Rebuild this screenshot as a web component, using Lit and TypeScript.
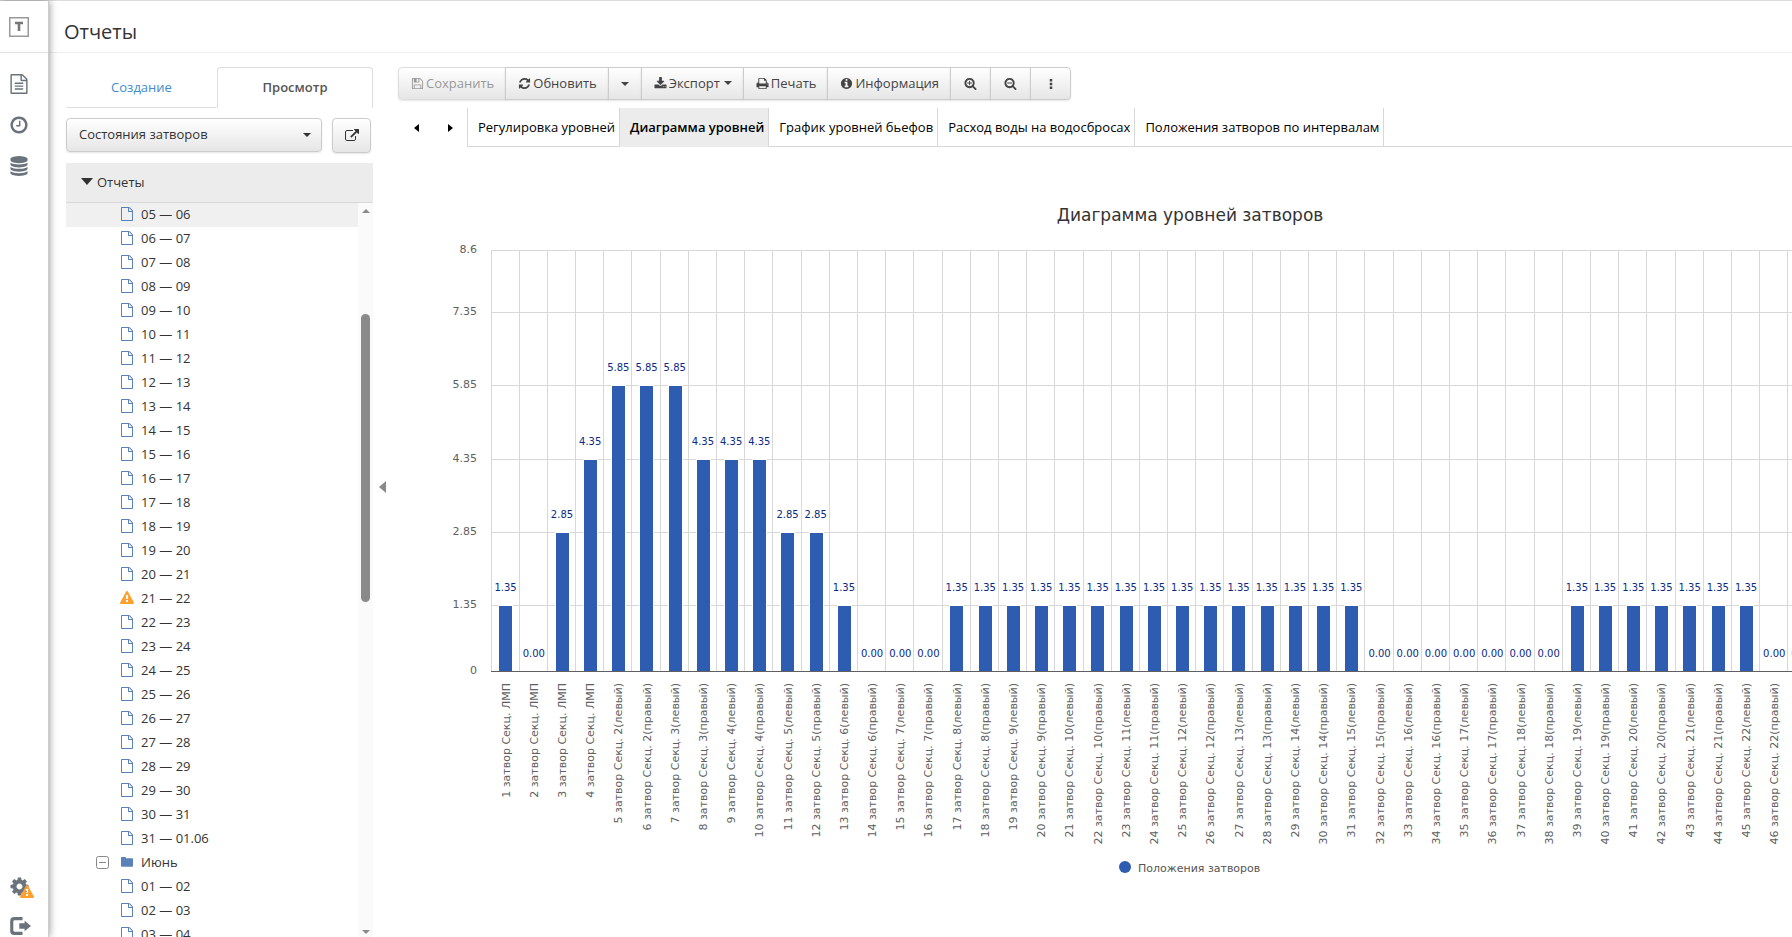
import { LitElement, html, svg, css } from "lit";
import { customElement, property, state } from "lit/decorators.js";
import { classMap } from "lit/directives/class-map.js";

const PAGE =
  "M1596 380q28 28 48 76t20 88v1152q0 40-28 68t-68 28h-1344q-40 0-68-28t-28-68v-1600q0-40 28-68t68-28h896q40 0 88 20t76 48zm-444-244v376h376q-10-29-22-41l-313-313q-12-12-41-22zm384 1528v-1024h-416q-40 0-68-28t-28-68v-416h-768v1536h1280z";
const LENS =
  "M1216 832q0-185-131.5-316.5t-316.5-131.5-316.5 131.5-131.5 316.5 131.5 316.5 316.5 131.5 316.5-131.5 131.5-316.5zm512 832q0 53-37.5 90.5t-90.5 37.5q-54 0-90-38l-343-342q-179 124-399 124-143 0-273.5-55.5t-225-150-150-225-55.5-273.5 55.5-273.5 150-225 225-150 273.5-55.5 273.5 55.5 225 150 150 225 55.5 273.5q0 220-124 399l343 343q37 37 37 90z";

const ICONS: Record<string, string> = {
  page: PAGE,
  text:
    PAGE +
    "M512 800q0-14 9-23t23-9h704q14 0 23 9t9 23v64q0 14-9 23t-23 9h-704q-14 0-23-9t-9-23v-64zm736 224q14 0 23 9t9 23v64q0 14-9 23t-23 9h-704q-14 0-23-9t-9-23v-64q0-14 9-23t23-9h704zm0 256q14 0 23 9t9 23v64q0 14-9 23t-23 9h-704q-14 0-23-9t-9-23v-64q0-14 9-23t23-9h704z",
  clock:
    "M1024 544v448q0 14-9 23t-23 9h-320q-14 0-23-9t-9-23v-64q0-14 9-23t23-9h224v-352q0-14 9-23t23-9h64q14 0 23 9t9 23zm416 352q0-148-73-273t-198-198-273-73-273 73-198 198-73 273 73 273 198 198 273 73 273-73 198-198 73-273zm224 0q0 209-103 385.5t-279.5 279.5-385.5 103-385.5-103-279.5-279.5-103-385.5 103-385.5 279.5-279.5 385.5-103 385.5 103 279.5 279.5 103 385.5z",
  database:
    "M896 768q237 0 443-43t325-127v170q0 69-103 128t-280 93.5-385 34.5-385-34.5-280-93.5-103-128v-170q119 84 325 127t443 43zm0 768q237 0 443-43t325-127v170q0 69-103 128t-280 93.5-385 34.5-385-34.5-280-93.5-103-128v-170q119 84 325 127t443 43zm0-384q237 0 443-43t325-127v170q0 69-103 128t-280 93.5-385 34.5-385-34.5-280-93.5-103-128v-170q119 84 325 127t443 43zm0-1152q208 0 385 34.5t280 93.5 103 128v128q0 69-103 128t-280 93.5-385 34.5-385-34.5-280-93.5-103-128v-128q0-69 103-128t280-93.5 385-34.5z",
  cog:
    "M1152 896q0-106-75-181t-181-75-181 75-75 181 75 181 181 75 181-75 75-181zm512-109v222q0 12-8 23t-20 13l-185 28q-19 54-39 91 35 50 107 138 10 12 10 25t-9 23q-27 37-99 108t-94 71q-12 0-26-9l-138-108q-44 23-91 38-16 136-29 186-7 28-36 28h-222q-14 0-24.5-8.5t-11.5-21.5l-28-184q-49-16-90-37l-141 107q-10 9-25 9-14 0-25-11-126-114-165-168-7-10-7-23 0-12 8-23 15-21 51-66.5t54-70.5q-27-50-41-99l-183-27q-13-2-21-12.5t-8-23.5v-222q0-12 8-23t19-13l186-28q14-46 39-92-40-57-107-138-10-12-10-24 0-10 9-23 26-36 98.5-107.5t94.5-71.5q13 0 26 10l138 107q44-23 91-38 16-136 29-186 7-28 36-28h222q14 0 24.5 8.5t11.5 21.5l28 184q49 16 90 37l142-107q9-9 24-9 13 0 25 10 129 119 165 170 7 8 7 22 0 12-8 23-15 21-51 66.5t-54 70.5q26 50 41 98l183 28q13 2 21 12.5t8 23.5z",
  exit:
    "M1100 160v272h-640q-110 0-110 110v708q0 110 110 110h640v272h-680q-322 0-322-322v-828q0-322 322-322zM1270 470l522 426-522 426v-210h-430v-432h430z",
  save:
    "M512 1536h768v-384h-768v384zm896 0h128v-896q0-14-10-38.5t-20-34.5l-281-281q-10-10-34-20t-39-10v416q0 40-28 68t-68 28h-576q-40 0-68-28t-28-68v-416h-128v1280h128v-416q0-40 28-68t68-28h832q40 0 68 28t28 68v416zm-384-928v-320q0-13-9.5-22.5t-22.5-9.5h-192q-13 0-22.5 9.5t-9.5 22.5v320q0 13 9.5 22.5t22.5 9.5h192q13 0 22.5-9.5t9.5-22.5zm640 32v928q0 40-28 68t-68 28h-1344q-40 0-68-28t-28-68v-1344q0-40 28-68t68-28h928q40 0 88 20t76 48l280 280q28 28 48 76t20 88z",
  refresh:
    "M1639 1056q0 5-1 7-64 268-268 434.5t-478 166.5q-146 0-282.5-55t-243.5-157l-129 129q-19 19-45 19t-45-19-19-45v-448q0-26 19-45t45-19h448q26 0 45 19t19 45-19 45l-137 137q71 66 161 102t187 36q134 0 250-65t186-179q11-17 53-117 8-23 30-23h192q13 0 22.5 9.5t9.5 22.5zm25-800v448q0 26-19 45t-45 19h-448q-26 0-45-19t-19-45 19-45l138-138q-148-137-349-137-134 0-250 65t-186 179q-11 17-53 117-8 23-30 23h-199q-13 0-22.5-9.5t-9.5-22.5v-7q65-268 270-434.5t480-166.5q146 0 284 55.5t245 156.5l130-129q19-19 45-19t45 19 19 45z",
  download:
    "M1344 1344q0-26-19-45t-45-19-45 19-19 45 19 45 45 19 45-19 19-45zm256 0q0-26-19-45t-45-19-45 19-19 45 19 45 45 19 45-19 19-45zm128-224v320q0 40-28 68t-68 28h-1472q-40 0-68-28t-28-68v-320q0-40 28-68t68-28h465l135 136q58 56 136 56t136-56l136-136h464q40 0 68 28t28 68zm-325-569q17 41-14 70l-448 448q-18 19-45 19t-45-19l-448-448q-31-29-14-70 17-39 59-39h256v-448q0-26 19-45t45-19h256q26 0 45 19t19 45v448h256q42 0 59 39z",
  print:
    "M448 1536h896v-256h-896v256zm0-640h896v-384h-160q-40 0-68-28t-28-68v-160h-640v640zm1152 64q0-26-19-45t-45-19-45 19-19 45 19 45 45 19 45-19 19-45zm128 0v416q0 13-9.5 22.5t-22.5 9.5h-224v160q0 40-28 68t-68 28h-960q-40 0-68-28t-28-68v-160h-224q-13 0-22.5-9.5t-9.5-22.5v-416q0-79 56.5-135.5t135.5-56.5h64v-544q0-40 28-68t68-28h672q40 0 88 20t76 48l152 152q28 28 48 76t20 88v256h64q79 0 135.5 56.5t56.5 135.5z",
  info:
    "M1152 1376v-160q0-14-9-23t-23-9h-96v-512q0-14-9-23t-23-9h-320q-14 0-23 9t-9 23v160q0 14 9 23t23 9h96v320h-96q-14 0-23 9t-9 23v160q0 14 9 23t23 9h448q14 0 23-9t9-23zm-128-896v-160q0-14-9-23t-23-9h-192q-14 0-23 9t-9 23v160q0 14 9 23t23 9h192q14 0 23-9t9-23zm640 416q0 209-103 385.5t-279.5 279.5-385.5 103-385.5-103-279.5-279.5-103-385.5 103-385.5 279.5-279.5 385.5-103 385.5 103 279.5 279.5 103 385.5z",
  zoomIn: LENS + "M448 768h256v-256h128v256h256v128h-256v256h-128v-256h-256z",
  zoomOut: LENS + "M448 768h640v128h-640z",
  more:
    "M736 256h320v320h-320zM736 736h320v320h-320zM736 1216h320v320h-320z",
  external:
    "M1408 928v320q0 119-84.5 203.5t-203.5 84.5h-832q-119 0-203.5-84.5t-84.5-203.5v-832q0-119 84.5-203.5t203.5-84.5h704q14 0 23 9t9 23v64q0 14-9 23t-23 9h-704q-66 0-113 47t-47 113v832q0 66 47 113t113 47h832q66 0 113-47t47-113v-320q0-14 9-23t23-9h64q14 0 23 9t9 23zm384-864v512q0 26-19 45t-45 19-45-19l-176-176-652 652q-10 10-23 10t-23-10l-114-114q-10-10-10-23t10-23l652-652-176-176q-19-19-19-45t19-45 45-19h512q26 0 45 19t19 45z",
  warning:
    "M1024 1375v-190q0-14-9.5-23.5t-22.5-9.5h-192q-13 0-22.5 9.5t-9.5 23.5v190q0 14 9.5 23.5t22.5 9.5h192q13 0 22.5-9.5t9.5-23.5zm-2-374l18-459q0-12-10-19-13-11-24-11h-220q-11 0-24 11-10 7-10 21l17 457q0 10 10 16.5t24 6.5h185q14 0 23.5-6.5t10.5-16.5zm-14-934l768 1408q35 63-2 126-17 29-46.5 46t-63.5 17h-1536q-34 0-63.5-17t-46.5-46q-37-63-2-126l768-1408q17-31 47-49t65-18 65 18 47 49z",
  folder:
    "M128 350q0-94 94-94h440q94 0 94 94v66h814q94 0 94 94v900q0 94-94 94h-1348q-94 0-94-94z",
};

const icon = (name: string, size = 14, cls = "") =>
  html`<svg class="icon ${cls}" width=${size} height=${size} viewBox="0 0 1792 1792" aria-hidden="true">
    <path fill-rule="evenodd" d=${ICONS[name]}></path>
  </svg>`;

const caret = (dir = "down") => {
  const d: Record<string, string> = {
    down: "M0 0h8l-4 4z",
    up: "M0 4h8l-4-4z",
  };
  return html`<svg class="caret" width="8" height="4" viewBox="0 0 8 4" aria-hidden="true"><path d=${d[dir]}></path></svg>`;
};

const side = (dir: "left" | "right", w: number, h: number) =>
  html`<svg class="caret" width=${w} height=${h} viewBox="0 0 5 10" preserveAspectRatio="none" aria-hidden="true">
    <path d=${dir === "left" ? "M5 0v10l-5-5z" : "M0 0v10l5-5z"}></path>
  </svg>`;

const pad = (n: number) => String(n).padStart(2, "0");

interface Gate {
  label: string;
  value: number;
}

const LEVELS = [
  1.35, 0, 2.85, 4.35, 5.85, 5.85, 5.85, 4.35, 4.35, 4.35, 2.85, 2.85, 1.35, 0, 0, 0,
  ...Array(15).fill(1.35),
  ...Array(7).fill(0),
  ...Array(7).fill(1.35),
  ...Array(7).fill(0),
];

const GATES: Gate[] = LEVELS.map((value, i) => {
  const n = i + 1;
  if (n <= 4) return { label: `${n} затвор Секц. ЛМП`, value };
  const section = Math.floor((n - 5) / 2) + 2;
  return { label: `${n} затвор Секц. ${section}(${n % 2 ? "левый" : "правый"})`, value };
});

@customElement("level-chart")
class LevelChart extends LitElement {
  @property({ attribute: false }) gates: Gate[] = [];
  @property() heading = "";
  @property() series = "";

  static styles = css`
    :host {
      display: block;
      font-family: "DejaVu Sans", sans-serif;
    }
    svg {
      display: block;
    }
    .grid {
      stroke: #d8d8d8;
      fill: none;
      shape-rendering: crispEdges;
    }
    .axis {
      stroke: #606060;
      shape-rendering: crispEdges;
    }
    .bar {
      fill: #2e5cb0;
      stroke: #fff;
      shape-rendering: crispEdges;
    }
    .title {
      font-size: 17px;
      fill: #333;
    }
    .tick,
    .name {
      font-size: 11px;
      fill: #606060;
    }
    .value {
      font-size: 10px;
      fill: #0a2a86;
    }
    .legend {
      font-size: 11px;
      fill: #555;
    }
    .dot {
      fill: #2e5cb0;
    }
  `;

  render() {
    const left = 93;
    const top = 90;
    const base = 511;
    const max = 8.6;
    const step = 28.192;
    const right = left + step * this.gates.length;
    const width = Math.round(right + 25);
    const mid = width / 2;
    const y = (v: number) => Math.ceil(base - ((base - top) * v) / max);
    const centre = (i: number) => left + 0.5 + step * (i + 0.5);

    return html`<svg width=${width} height="720" role="img" aria-label=${this.heading}>
      <text class="title" x=${mid} y="61" text-anchor="middle">${this.heading}</text>
      <g class="grid">
        ${[...this.gates, null].map((_, i) => {
          const x = Math.floor(left + step * i) + 0.5;
          return svg`<path d="M${x} ${top}V${base}"></path>`;
        })}
        ${[8.6, 7.35, 5.85, 4.35, 2.85, 1.35].map(
          (v) => svg`<path d="M${left} ${y(v) + 0.5}H${right}"></path>`
        )}
      </g>
      ${[8.6, 7.35, 5.85, 4.35, 2.85, 1.35, 0].map(
        (v) => svg`<text class="tick" x="79" y=${y(v) + 3} text-anchor="end">${v}</text>`
      )}
      ${this.gates.map((g, i) => {
        const x = Math.round(centre(i) - 6.2);
        const h = base - y(g.value);
        return svg`
          ${g.value ? svg`<rect class="bar" x=${x - 0.5} y=${base - h + 0.5} width="14" height=${h}></rect>` : ""}
          <text class="value" x=${centre(i)} y=${base - h - 14} text-anchor="middle">${g.value.toFixed(2)}</text>
          <text class="name" transform="translate(${Math.round(centre(i)) + 4} 523) rotate(-90)" text-anchor="end">${g.label}</text>`;
      })}
      <path class="axis" d="M${left} ${base + 0.5}H${right}"></path>
      <circle class="dot" cx=${mid - 65} cy="707" r="6"></circle>
      <text class="legend" x=${mid - 52} y="712">${this.series}</text>
    </svg>`;
  }
}

@customElement("app-root")
class AppRoot extends LitElement {
  @state() private sheet = 1;

  static styles = css`
    :host {
      display: block;
      height: 100vh;
      overflow: hidden;
      background: #fff;
      color: #333;
      font: 13px/20px "Open Sans", sans-serif;
    }
    * {
      box-sizing: border-box;
    }
    button,
    select {
      font: inherit;
      color: inherit;
      margin: 0;
    }
    a {
      text-decoration: none;
      color: inherit;
    }
    .icon,
    .caret {
      display: block;
      flex: none;
      fill: currentColor;
    }
    .shell {
      display: flex;
      height: 100%;
      border-top: 1px solid #ddd;
    }
    .rail {
      flex: none;
      width: 49px;
      display: flex;
      flex-direction: column;
      color: #6a737b;
      border-right: 1px solid #ccc;
      box-shadow: 0 0 8px rgba(0, 0, 0, 0.45);
      z-index: 1;
      background: #fff;
    }
    .brand {
      height: 52px;
      padding: 16px 9px;
      border-bottom: 1px solid #e2e2e2;
      flex: none;
    }
    .brand svg {
      display: block;
    }
    .links {
      display: flex;
      flex-direction: column;
      padding: 21px 9px 0;
      gap: 21px;
    }
    .foot {
      margin-top: auto;
      display: flex;
      flex-direction: column;
      padding: 0 9px;
      gap: 18px;
    }
    .settings {
      position: relative;
    }
    .badge {
      position: absolute;
      left: 11px;
      bottom: -2px;
      color: #ff9f2e;
    }
    .page {
      flex: 1;
      min-width: 0;
      display: flex;
      flex-direction: column;
    }
    .head {
      height: 52px;
      flex: none;
      padding: 10px 15px 0;
      border-bottom: 1px solid #eee;
      display: flex;
      align-items: center;
    }
    h1 {
      margin: 0;
      font-size: 20px;
      line-height: 28px;
      font-weight: 400;
    }
    .body {
      flex: 1;
      min-height: 0;
      display: flex;
      padding-top: 14px;
    }
    .panel {
      flex: none;
      width: 307px;
      margin-left: 17px;
      display: flex;
      flex-direction: column;
    }
    .tabs {
      display: flex;
      height: 41px;
      flex: none;
    }
    .tabs button {
      border: 1px solid transparent;
      border-bottom-color: #ddd;
      background: none;
      width: 151px;
      color: #428bca;
      padding: 0 0 2px;
    }
    .tabs .on {
      flex: 1;
      border-color: #ddd;
      border-bottom: none;
      border-radius: 4px 4px 0 0;
      color: #555;
      font-weight: 600;
    }
    .pick {
      display: flex;
      gap: 10px;
      margin: 10px 2px 10px 0;
      flex: none;
    }
    .btn {
      display: flex;
      align-items: center;
      justify-content: center;
      gap: 2px;
      height: 33px;
      border: 1px solid #ccc;
      background: linear-gradient(#fff, #e6e6e6);
      box-shadow: 0 1px 2px rgba(0, 0, 0, 0.1);
      padding: 0 11px 1px 12px;
      white-space: nowrap;
    }
    .pick .btn {
      width: 39px;
      height: 35px;
      padding: 0;
      border-radius: 4px;
    }
    .drop {
      flex: 1;
      position: relative;
      display: flex;
    }
    .drop select {
      appearance: none;
      width: 100%;
      height: 34px;
      padding: 0 30px 2px 12px;
      border: 1px solid #ccc;
      border-radius: 4px;
      background: linear-gradient(#fff, #e6e6e6);
      box-shadow: 0 1px 2px rgba(0, 0, 0, 0.1);
    }
    .drop .caret {
      position: absolute;
      right: 11px;
      top: 15px;
      pointer-events: none;
    }
    .group {
      height: 40px;
      flex: none;
      background: #ececec;
      border: 0;
      border-bottom: 1px solid #d8d8d8;
      display: flex;
      align-items: center;
      gap: 4px;
      padding: 0 15px 2px;
      fill: #333;
    }
    .scroller {
      flex: 1;
      min-height: 0;
      display: flex;
    }
    .tree {
      flex: 1;
      overflow: hidden;
      margin: 0;
      padding: 0;
      list-style: none;
    }
    .tree a {
      height: 24px;
      display: flex;
      align-items: center;
      gap: 7px;
      padding: 0 0 2px 54px;
    }
    .tree .icon {
      color: #5b82b8;
    }
    .tree .alert {
      color: #ff9f2e;
    }
    .tree .sel {
      background: #f0f0f0;
    }
    .tree .month {
      padding-left: 30px;
      gap: 11px;
    }
    .month span {
      margin-left: -4px;
    }
    .bar {
      width: 15px;
      background: #fafafa;
      color: #8a8a8a;
      display: flex;
      flex-direction: column;
      align-items: center;
      padding: 6px 0 3px;
    }
    .thumb {
      width: 9px;
      height: 288px;
      margin: 101px 0 auto;
      border-radius: 5px;
      background: #8a8a8a;
    }
    .split {
      flex: none;
      width: 25px;
      padding: 0 6px 30px;
      border: 0;
      background: none;
      color: #8a8a8a;
      display: flex;
      align-items: center;
    }
    .main {
      flex: 1;
      min-width: 0;
      display: flex;
      flex-direction: column;
    }
    .tools {
      display: flex;
      flex: none;
      color: #444;
      margin-bottom: 8px;
    }
    .tools .btn + .btn {
      margin-left: -1px;
    }
    .tools .btn:first-child {
      border-radius: 4px 0 0 4px;
    }
    .tools .btn:last-child {
      border-radius: 0 4px 4px 0;
    }
    .tools .btn:disabled {
      color: #999;
      border-color: #ddd;
    }
    .tools .sq {
      width: 41px;
      padding: 0;
    }
    .tools .thin {
      width: 34px;
      padding: 0;
    }
    .tools span {
      margin-right: 2px;
    }
    .sheets {
      display: flex;
      flex: none;
      height: 39px;
      color: #000;
      padding-left: 1px;
    }
    .step {
      width: 34px;
      border: 0;
      padding: 0;
      background: none;
      display: flex;
      align-items: center;
      justify-content: center;
    }
    .strip {
      flex: 1;
      display: flex;
      border-left: 1px solid #d8d8d8;
    }
    .strip button {
      border: 0;
      border-right: 1px solid #d8d8d8;
      border-bottom: 1px solid #d8d8d8;
      background: none;
      padding: 0 4px 0 10px;
      white-space: nowrap;
    }
    .strip .on {
      background: #ececec;
      border-color: #ececec;
      border-right-color: #d8d8d8;
      font-weight: 600;
    }
    .rest {
      flex: 1;
      border-bottom: 1px solid #d8d8d8;
    }
    .view {
      flex: 1;
      min-height: 0;
      overflow: hidden;
      padding-top: 13px;
    }
  `;

  private file(from: string, to: string, opts: { sel?: boolean; warn?: boolean } = {}) {
    return html`<li>
      <a href="#" class=${classMap({ sel: !!opts.sel })}>
        ${opts.warn ? icon("warning", 14, "alert") : icon("page", 14)}<span>${from} — ${to}</span>
      </a>
    </li>`;
  }

  render() {
    const may = Array.from({ length: 26 }, (_, i) => i + 5);
    const sheets = [
      "Регулировка уровней",
      "Диаграмма уровней",
      "График уровней бьефов",
      "Расход воды на водосбросах",
      "Положения затворов по интервалам",
    ];
    return html`
      <div class="shell">
        <nav class="rail">
          <a class="brand" href="#" aria-label="Главная">
            <svg width="20" height="20" viewBox="0 0 20 20" fill="none">
              <rect x="0.75" y="0.75" width="18.5" height="18.5" stroke="#999" stroke-width="1.5"></rect>
              <path d="M6 6h8M10 5v9" stroke="#777" stroke-width="2.6"></path>
            </svg>
          </a>
          <div class="links">
            <a href="#" aria-label="Отчеты">${icon("text", 20)}</a>
            <a href="#" aria-label="История">${icon("clock", 20)}</a>
            <a href="#" aria-label="Данные">${icon("database", 20)}</a>
          </div>
          <div class="foot">
            <a class="settings" href="#" aria-label="Настройки">${icon("cog", 21)}${icon("warning", 14, "badge")}</a>
            <a href="#" aria-label="Выход">${icon("exit", 22)}</a>
          </div>
        </nav>
        <div class="page">
          <header class="head"><h1>Отчеты</h1></header>
          <div class="body">
            <aside class="panel">
              <div class="tabs">
                <button type="button">Создание</button>
                <button type="button" class="on">Просмотр</button>
              </div>
              <div class="pick">
                <div class="drop">
                  <select aria-label="Вид отчета">
                    <option>Состояния затворов</option>
                  </select>
                  ${caret()}
                </div>
                <button type="button" class="btn" aria-label="Открыть">${icon("external", 14)}</button>
              </div>
              <button type="button" class="group">
                <svg width="12" height="7" viewBox="0 0 12 7" aria-hidden="true"><path d="M0 0h12l-6 7z"></path></svg>
                <span>Отчеты</span>
              </button>
              <div class="scroller">
                <ul class="tree">
                  ${may.map((d) => this.file(pad(d), pad(d + 1), { sel: d === 5, warn: d === 21 }))}
                  ${this.file("31", "01.06")}
                  <li>
                    <a href="#" class="month">
                      <svg width="13" height="13" viewBox="0 0 13 13" fill="none" stroke="#888" aria-hidden="true">
                        <rect x="0.5" y="0.5" width="12" height="12" rx="2"></rect>
                        <path d="M3 6.5h7"></path>
                      </svg>
                      ${icon("folder", 14)}<span>Июнь</span>
                    </a>
                  </li>
                  ${[1, 2, 3].map((d) => this.file(pad(d), pad(d + 1)))}
                </ul>
                <div class="bar">${caret("up")}<div class="thumb"></div>${caret()}</div>
              </div>
            </aside>
            <button type="button" class="split" aria-label="Свернуть">${side("left", 7, 12)}</button>
            <main class="main">
              <div class="tools">
                <button type="button" class="btn" disabled>${icon("save", 13)}Сохранить</button>
                <button type="button" class="btn">${icon("refresh", 13)}Обновить</button>
                <button type="button" class="btn thin" aria-label="Варианты">${caret()}</button>
                <button type="button" class="btn">${icon("download", 13)}<span>Экспорт</span>${caret()}</button>
                <button type="button" class="btn">${icon("print", 13)}Печать</button>
                <button type="button" class="btn">${icon("info", 13)}Информация</button>
                <button type="button" class="btn sq" aria-label="Увеличить">${icon("zoomIn", 13)}</button>
                <button type="button" class="btn sq" aria-label="Уменьшить">${icon("zoomOut", 13)}</button>
                <button type="button" class="btn sq" aria-label="Еще">${icon("more", 14)}</button>
              </div>
              <div class="sheets">
                <button type="button" class="step" aria-label="Назад">${side("left", 5, 8)}</button>
                <button type="button" class="step" aria-label="Вперед">${side("right", 5, 8)}</button>
                <div class="strip">
                  ${sheets.map(
                    (s, i) => html`<button
                      type="button"
                      class=${classMap({ on: i === this.sheet })}
                      @click=${() => (this.sheet = i)}
                    >
                      ${s}
                    </button>`
                  )}
                  <span class="rest"></span>
                </div>
              </div>
              <div class="view">
                <level-chart
                  .gates=${GATES}
                  heading="Диаграмма уровней затворов"
                  series="Положения затворов"
                ></level-chart>
              </div>
            </main>
          </div>
        </div>
      </div>
    `;
  }
}
